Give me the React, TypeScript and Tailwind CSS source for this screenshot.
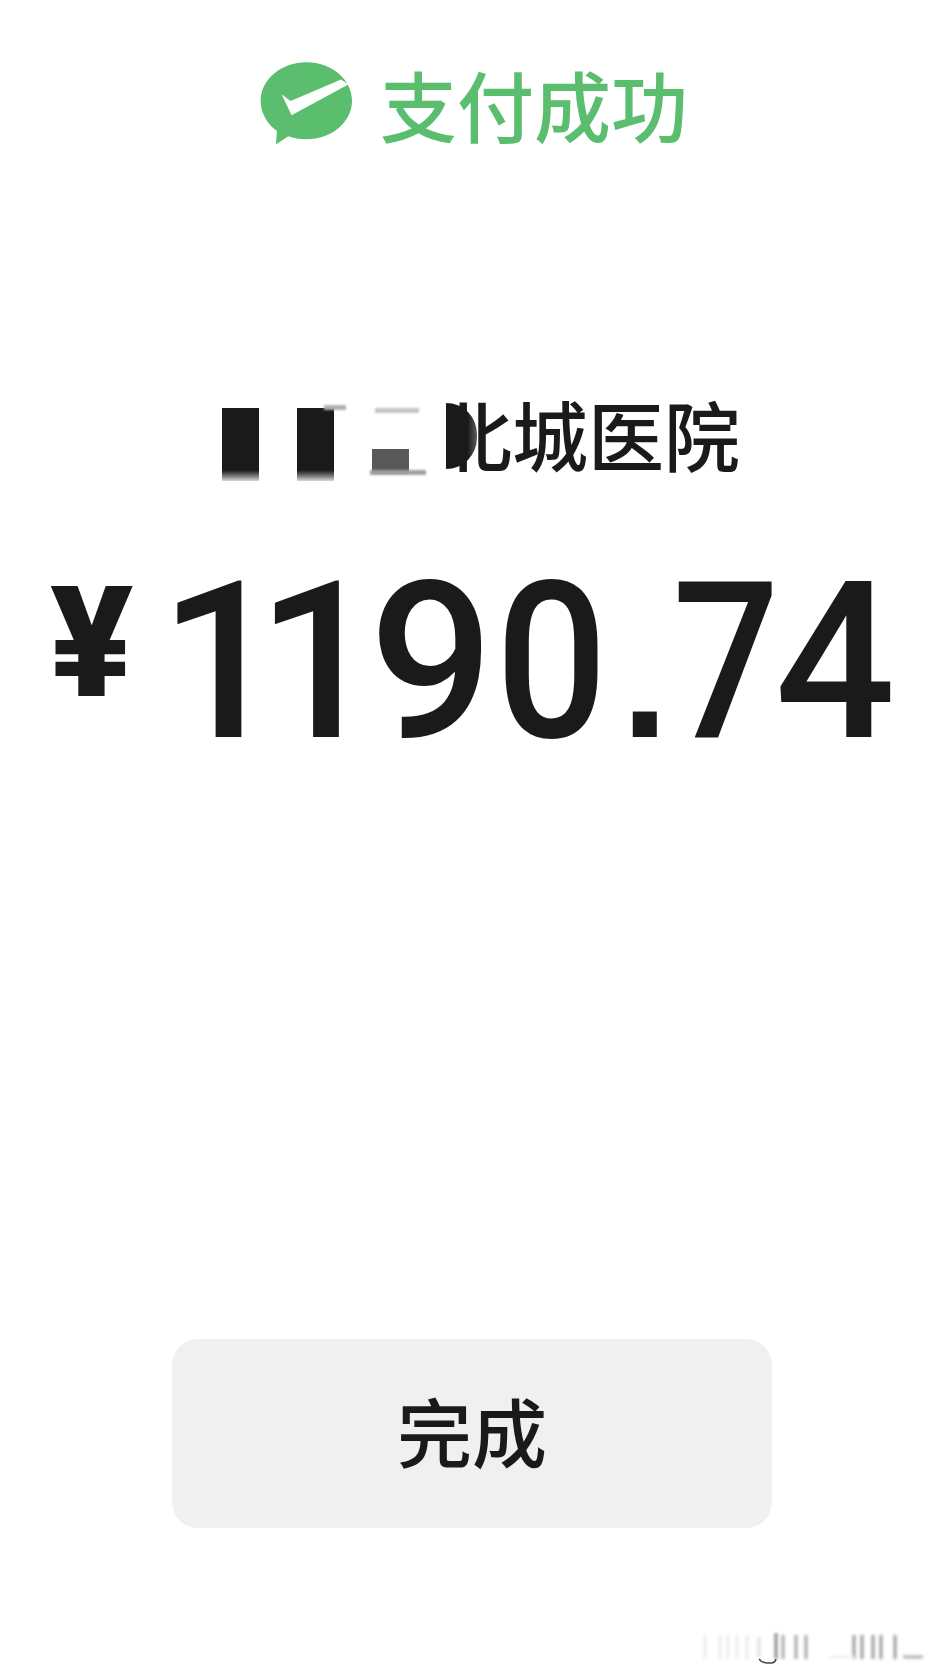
const cjk = "font-['Noto_Sans_CJK_SC','Noto_Sans',sans-serif]";

// the digits sit closer than their advance width, so each carries its own tracking
const digits = [
  { ch: '1', cls: 'tracking-[-27px]' },
  { ch: '1', cls: 'tracking-[-12px]' },
  { ch: '9', cls: 'tracking-[-5px]' },
  { ch: '0', cls: 'inline-block scale-x-90 tracking-[8px]' },
  { ch: '.', cls: "text-[170px] font-bold font-['Liberation_Sans',sans-serif] tracking-[-4px]" },
  { ch: '7', cls: 'inline-block scale-x-[0.86] tracking-[-16px]' },
  { ch: '4', cls: 'inline-block scale-x-[0.97] tracking-[0px]' },
];

function PayLogo() {
  return (
    <svg viewBox="60 65 280 255" className="w-[93px] h-[85px] shrink-0">
      <path
        d="M200 68c76 0 137 52 137 116s-61 116-137 116c-20 0-38-3-55-9l-37 25 3-41c-30-21-49-54-49-91 0-64 62-116 138-116z"
        fill="#5bbd6e"
      />
      <path d="M125 165l27 20 152-65 22 15-171 93z" fill="#ffffff" />
    </svg>
  );
}

function Residue() {
  return (
    <svg viewBox="0 0 264 40" className="w-[264px] h-[40px]">
      <defs>
        <filter id="soft">
          <feGaussianBlur stdDeviation="1.6" />
        </filter>
      </defs>
      <g filter="url(#soft)" strokeWidth="3" fill="none">
        <path d="M25 6v24M40 6v24M48 6v24M57 6v24M67 6v24" stroke="#ececec" />
        <path d="M79 8v20" stroke="#e0e0e0" />
        <path d="M96 4v26" stroke="#8a8a8a" />
        <path d="M103 6v24M116 6v24M126 6v24" stroke="#a8a8a8" />
        <path d="M174 6v24M182 6v24M193 6v24M201 6v24M215 6v24" stroke="#9c9c9c" />
        <path d="M223 28h20" stroke="#b0b0b0" />
        <path d="M150 28h24" stroke="#f0f0f0" />
      </g>
      <path d="M79 30q3 4 8 4h4q4 0 5-4" stroke="#444444" strokeWidth="1.5" fill="none" />
    </svg>
  );
}

export default function App() {
  return (
    <div className={`w-[944px] h-[1678px] bg-white flex flex-col items-center text-[#1a1a1a] ${cjk}`}>
      <div className="mt-[60px] ml-[4px] h-[87px] flex items-center gap-[27px] text-[#5bbd6e] text-[77px] font-medium leading-none">
        <PayLogo />
        <span>支付成功</span>
      </div>

      <div className="mt-[244px] h-[90px] self-start ml-[222px] flex items-center">
        <div className="w-[37px] h-[73px] mt-[16px] bg-gradient-to-b from-[#1a1a1a] from-85% to-[#d8d8d8]" />
        <div className="relative w-[37px] h-[73px] mt-[16px] ml-[38px] bg-gradient-to-b from-[#1a1a1a] from-85% to-[#d8d8d8]">
          <div className="absolute left-[27px] top-[-3px] w-[22px] h-[5px] bg-[#b0b0b0] blur-[1px]" />
        </div>
        <div className="relative w-[37px] h-[25px] mt-[50px] ml-[38px] bg-[#585858]">
          <div className="absolute left-[3px] top-[-41px] w-[44px] h-[5px] bg-[#c4c4c4] blur-[1px]" />
          <div className="absolute left-[-2px] top-[21px] w-[56px] h-[5px] bg-[#a0a0a0] blur-[1px]" />
        </div>
        <div className="relative ml-[27px] mb-[6px] text-[76px] font-medium leading-none whitespace-nowrap">
          北城医院
          {/* the redaction hides the left half of the first character */}
          <div className="absolute left-0 top-0 w-[10px] h-full bg-white" />
          <div className="absolute left-[10px] top-[8px] w-[31px] h-[66px] rounded-r-full bg-gradient-to-r from-[#1a1a1a] from-70% to-[#1a1a1a]/70" />
        </div>
      </div>

      <div className="mt-[97px] self-start ml-[50px] flex items-center h-[168px] font-['Roboto',sans-serif] font-medium">
        <span className="mb-[36px] text-[154px] leading-none font-black">¥</span>
        <div className="ml-[26px] flex items-baseline text-[219px] leading-none">
          {digits.map((d, i) => (
            <span key={i} className={d.cls}>
              {d.ch}
            </span>
          ))}
        </div>
      </div>

      <button className="mt-[593px] w-[600px] h-[189px] rounded-[26px] bg-[#f0f0f0] pb-[8px] text-[75px] font-medium leading-none">
        完成
      </button>

      <div className="mt-[101px] self-end">
        <Residue />
      </div>
    </div>
  );
}
